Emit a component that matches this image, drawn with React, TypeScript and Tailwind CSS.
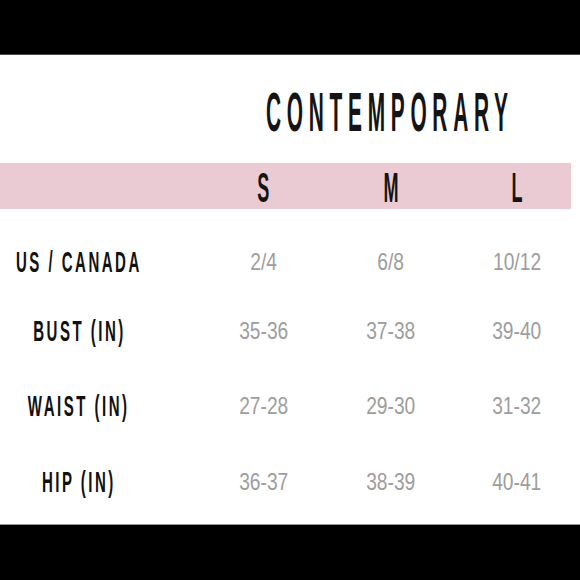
const sizes = ["S", "M", "L"];

const rows = [
  { label: "US / CANADA", values: ["2/4", "6/8", "10/12"], gap: "mt-[33px]" },
  { label: "BUST (IN)", values: ["35-36", "37-38", "39-40"], gap: "mt-[29px]" },
  { label: "WAIST (IN)", values: ["27-28", "29-30", "31-32"], gap: "mt-[35px]" },
  { label: "HIP (IN)", values: ["36-37", "38-39", "40-41"], gap: "mt-[36px]" },
];

export default function App() {
  return (
    <div className="w-[580px] h-[580px] flex flex-col bg-white [font-family:'Liberation_Sans',Arial,sans-serif]">
      {/* top bar */}
      <div className="h-[55px] bg-black border-b border-[#4a4a4a]" />

      <div className="flex-1 flex flex-col">
        {/* title */}
        <div className="h-[108px] pt-[6px] grid grid-cols-[200px_127px_127px_126px] items-center">
          <div className="col-start-2 col-span-3 flex justify-center">
            <span className="inline-block whitespace-nowrap text-[55px] leading-none font-bold tracking-[15px] scale-x-[0.38] text-[#141414]">
              CONTEMPORARY
            </span>
          </div>
        </div>

        {/* size band */}
        <div className="h-[46px] w-[571px] bg-[#ebcbd3] grid grid-cols-[200px_127px_127px_127px] items-center pt-[2px]">
          <div />
          {sizes.map((s) => (
            <div key={s} className="flex justify-center">
              <span className="inline-block text-[43px] leading-none font-bold scale-x-[0.42] text-[#141414]">
                {s}
              </span>
            </div>
          ))}
        </div>

        {/* measurement rows */}
        {rows.map((r) => (
          <div key={r.label} className={`h-[40px] grid grid-cols-[200px_127px_127px_126px] items-center ${r.gap}`}>
            <div className="w-[158px] flex justify-center">
              <span className="inline-block whitespace-nowrap text-[30px] leading-none font-bold tracking-[5px] scale-x-[0.5] text-[#111]">
                {r.label}
              </span>
            </div>
            {r.values.map((v, i) => (
              <div key={i} className="flex justify-center">
                <span className="inline-block whitespace-nowrap text-[24px] leading-none scale-x-[0.8] text-[#9d9d9d]">
                  {v}
                </span>
              </div>
            ))}
          </div>
        ))}
      </div>

      {/* bottom bar */}
      <div className="h-[56px] bg-black border-t border-[#9a9a9a]" />
    </div>
  );
}
